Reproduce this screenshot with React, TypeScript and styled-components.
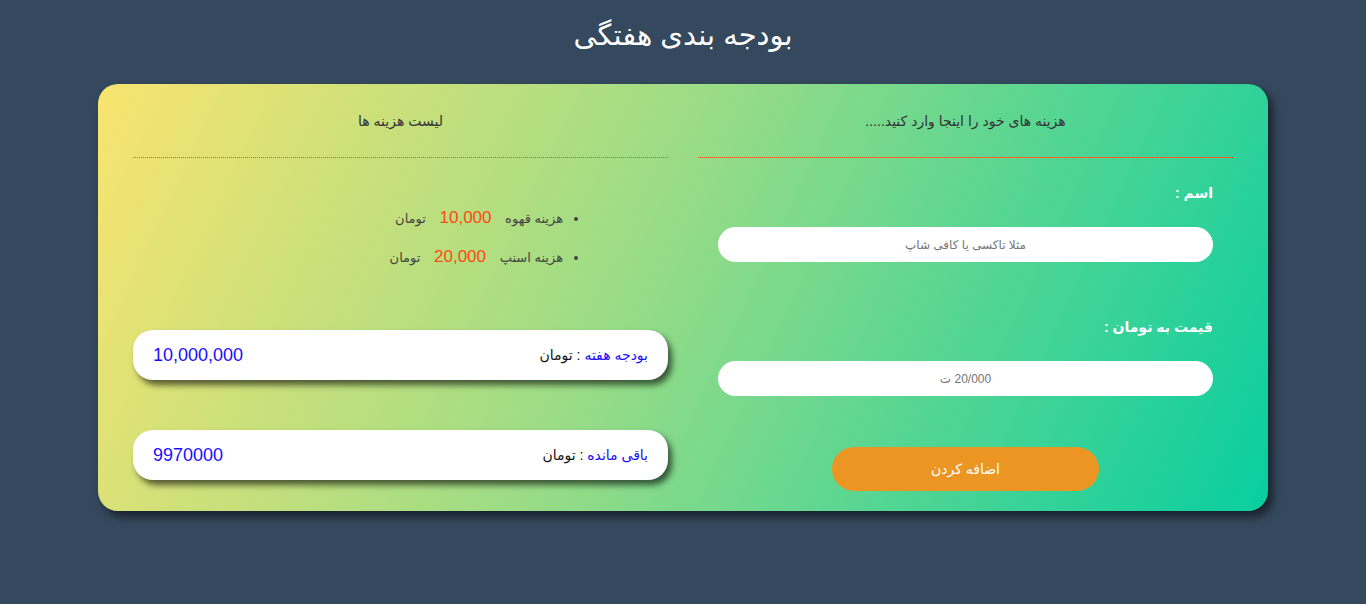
import React from "react";
import styled, { createGlobalStyle } from "styled-components";

const Global = createGlobalStyle`
  html, body { margin: 0; padding: 0; }
  body {
    background: #35495e;
    font-family: "Liberation Sans", "DejaVu Sans", "Noto Sans", sans-serif;
    min-height: 604px;
  }
  * { box-sizing: border-box; }
`;

const Page = styled.div`
  direction: rtl;
  padding-top: 15px;
`;

const Title = styled.h1`
  margin: 0;
  text-align: center;
  color: #fff;
  font-size: 29px;
  font-weight: normal;
  line-height: 40px;
`;

const Card = styled.div`
  width: 1170px;
  margin: 29px auto 0;
  border-radius: 20px;
  background: linear-gradient(115deg, #f9e46f 0%, #9bdc86 45%, #08cea0 100%);
  box-shadow: 5px 6px 10px rgba(0, 0, 0, 0.55);
  display: grid;
  grid-template-columns: 535px 535px;
  column-gap: 30px;
  padding: 0 35px 20px;
`;

const Column = styled.section`
  display: flex;
  flex-direction: column;
`;

const ColumnHeader = styled.div`
  height: 74px;
  display: flex;
  align-items: center;
  justify-content: center;
  color: #333;
  font-size: 14px;
  border-bottom: 1px dotted #ff4a10;
`;

const Label = styled.label<{ $top: number }>`
  display: block;
  margin-top: ${(p) => p.$top}px;
  padding: 0 20px;
  color: #fff;
  font-weight: bold;
  font-size: 14px;
  line-height: 18px;
`;

const Input = styled.input`
  display: block;
  margin: 25px 20px 0;
  width: 495px;
  height: 35px;
  border: none;
  border-radius: 18px;
  background: #fff;
  text-align: center;
  font-family: inherit;
  font-size: 12px;
  outline: none;
  &::placeholder { color: #757575; }
`;

const Button = styled.button`
  align-self: center;
  margin-top: 51px;
  width: 267px;
  height: 44px;
  border: none;
  border-radius: 22px;
  background: #eb9622;
  color: #fff;
  font-family: inherit;
  font-size: 14px;
`;

const List = styled.ul`
  margin: 40px 0 0;
  padding: 0 105px 0 0;
  color: #444;
  font-size: 13px;
`;

const Item = styled.li`
  line-height: 39px;
  height: 39px;
`;

const Amount = styled.span`
  color: #ff4a12;
  font-size: 17px;
  margin: 0 10px;
`;

const Box = styled.div<{ $top: number }>`
  margin-top: ${(p) => p.$top}px;
  height: 50px;
  border-radius: 20px;
  background: #fff;
  box-shadow: 4px 5px 6px rgba(0, 0, 0, 0.6);
  display: flex;
  align-items: center;
  justify-content: space-between;
  padding: 0 20px;
`;

const BoxLabel = styled.span`
  font-size: 14px;
  color: #111;
`;

const Blue = styled.span`
  color: #1a0dff;
`;

const Value = styled.span`
  color: #1a0dff;
  font-size: 18px;
`;

export default function App() {
  return (
    <>
      <Global />
      <Page>
        <Title>بودجه بندی هفتگی</Title>
        <Card>
          <Column>
            <ColumnHeader>هزینه های خود را اینجا وارد کنید.....</ColumnHeader>
            <Label $top={26}>اسم :</Label>
            <Input placeholder="مثلا تاکسی یا کافی شاپ" />
            <Label $top={56}>قیمت به تومان :</Label>
            <Input placeholder="20/000 ت" />
            <Button>اضافه کردن</Button>
          </Column>
          <Column>
            <ColumnHeader>لیست هزینه ها</ColumnHeader>
            <List>
              <Item>
                هزینه قهوه <Amount>10,000</Amount> تومان
              </Item>
              <Item>
                هزینه اسنپ <Amount>20,000</Amount> تومان
              </Item>
            </List>
            <Box $top={54}>
              <BoxLabel>
                <Blue>بودجه هفته</Blue> : تومان
              </BoxLabel>
              <Value>10,000,000</Value>
            </Box>
            <Box $top={50}>
              <BoxLabel>
                <Blue>باقی مانده</Blue> : تومان
              </BoxLabel>
              <Value>9970000</Value>
            </Box>
          </Column>
        </Card>
      </Page>
    </>
  );
}
